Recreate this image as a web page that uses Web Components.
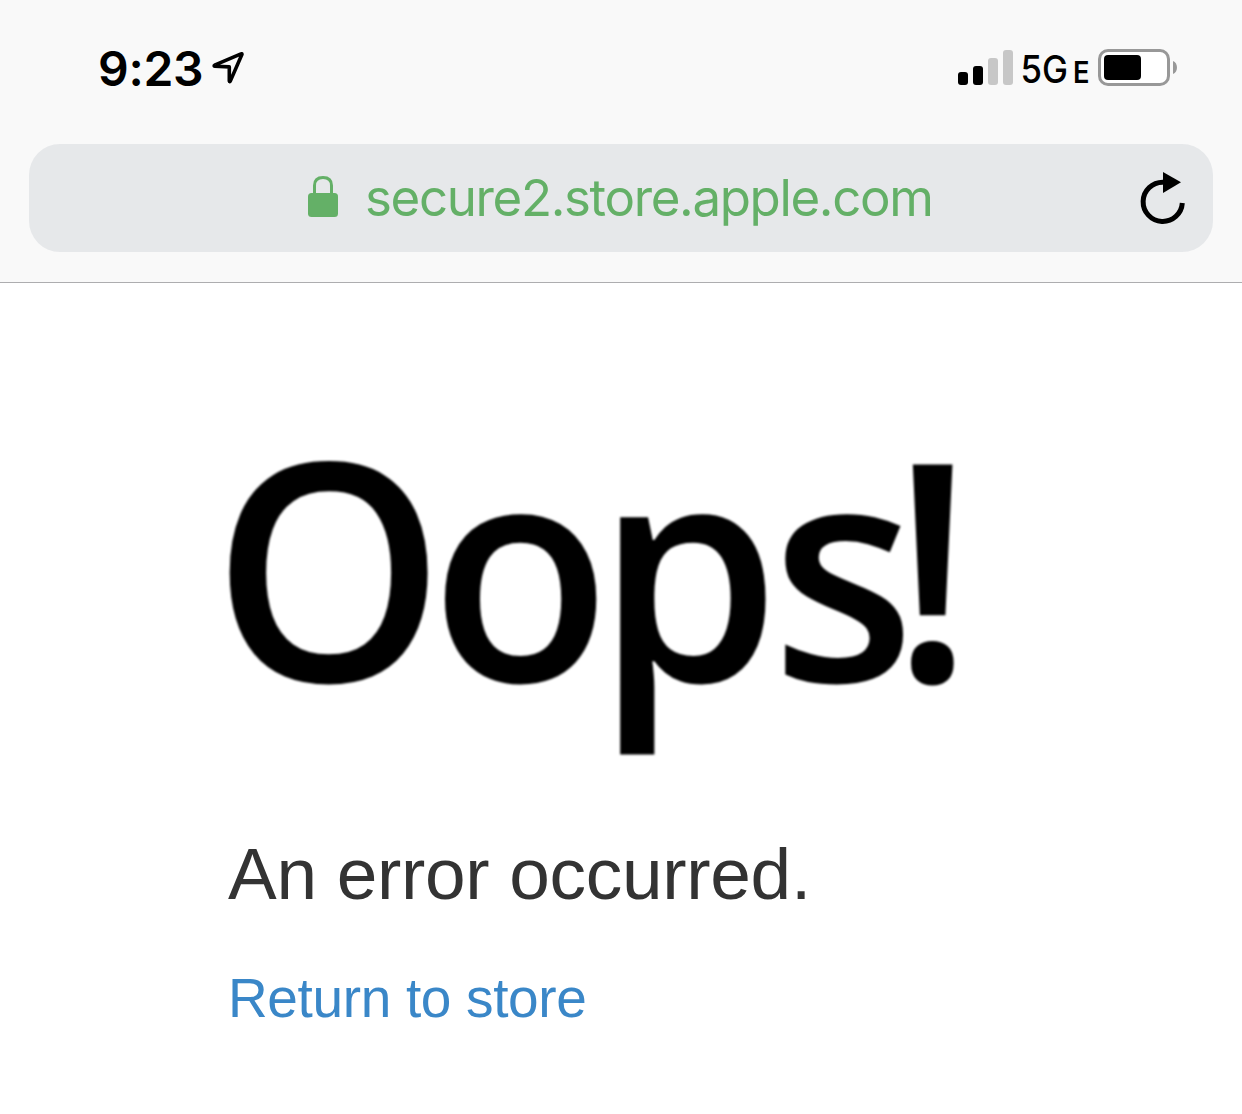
<!DOCTYPE html>
<html lang="en">
<head>
<meta charset="utf-8">
<title>Oops!</title>
<style>
   body {
      margin: 0;
      background: #fff;
      font-family: "Liberation Sans", Arial, sans-serif;
   }
</style>
</head>
<body>
<browser-header>
   <status-bar slot="status">9:23</status-bar>
   <address-bar>secure2.store.apple.com</address-bar>
</browser-header>
<error-page>
   <oops-title slot="title"></oops-title>
   An error occurred.
   <store-link slot="link">Return to store</store-link>
</error-page>

<script>
class LocationIcon extends HTMLElement {
   constructor() {
      super();
      this.attachShadow({mode: 'open'}).innerHTML = `
         <style>:host { display: block; width: 34px; height: 36px; } svg { display: block; }</style>
         <svg width="34" height="36" viewBox="0 0 34 36" fill="none" stroke="#000" stroke-width="3.6" stroke-linejoin="round">
            <path d="M31 4.2C31 3.8 30.6 3.6 30 3.9L3.6 15.2C2.9 15.6 3 16.2 3.8 16.3L18.3 16.9L18.3 31C18.4 31.8 19 31.8 19.3 31.1Z"/>
         </svg>`;
   }
}

class SignalIcon extends HTMLElement {
   constructor() {
      super();
      this.attachShadow({mode: 'open'}).innerHTML = `
         <style>:host { display: block; width: 55px; height: 36px; } svg { display: block; }</style>
         <svg width="55" height="36" viewBox="0 0 55 36">
            <rect x="0" y="22" width="10" height="13" rx="3"/>
            <rect x="15" y="16" width="10" height="19" rx="3"/>
            <rect x="30" y="8" width="10" height="27" rx="3" fill="#c7c7c7"/>
            <rect x="45" y="0" width="10" height="35" rx="3" fill="#c7c7c7"/>
         </svg>`;
   }
}

class NetworkLabel extends HTMLElement {
   constructor() {
      super();
      this.attachShadow({mode: 'open'}).innerHTML = `
         <style>
            :host { display: block; width: 68px; height: 36px; }
            svg { display: block; overflow: visible; }
            text { font-family: Inter, sans-serif; font-weight: 550; }
            .small { font-weight: 600; }
         </style>
         <svg width="68" height="36" viewBox="0 0 68 36">
            <text x="-1.6" y="33" font-size="38" textLength="47.5" lengthAdjust="spacingAndGlyphs">5G</text>
            <text class="small" x="51" y="33" font-size="30" textLength="16.5" lengthAdjust="spacingAndGlyphs">E</text>
         </svg>`;
   }
}

class BatteryIcon extends HTMLElement {
   constructor() {
      super();
      this.attachShadow({mode: 'open'}).innerHTML = `
         <style>:host { display: block; width: 80px; height: 37px; } svg { display: block; }</style>
         <svg width="80" height="37" viewBox="0 0 80 37">
            <rect x="1.5" y="1.5" width="69" height="34" rx="8.5" fill="#fff" stroke="#989898" stroke-width="3"/>
            <rect x="6" y="6" width="37" height="25" rx="4"/>
            <path d="M75 12C80.3 14 80.3 23 75 25Z" fill="#989898"/>
         </svg>`;
   }
}

class LockIcon extends HTMLElement {
   constructor() {
      super();
      this.attachShadow({mode: 'open'}).innerHTML = `
         <style>:host { display: block; width: 30px; height: 44px; } svg { display: block; }</style>
         <svg width="30" height="41" viewBox="0 0 30 41">
            <path d="M6.5 19V9.5Q6.5 1.5 15 1.5T23.5 9.5V19" fill="none" stroke="currentColor" stroke-width="3"/>
            <rect y="17" width="30" height="24" rx="3.5" fill="currentColor"/>
         </svg>`;
   }
}

class ReloadIcon extends HTMLElement {
   constructor() {
      super();
      this.attachShadow({mode: 'open'}).innerHTML = `
         <style>:host { display: block; width: 46px; height: 53px; } svg { display: block; }</style>
         <svg width="46" height="53" viewBox="0 0 46 53">
            <path d="M23 10.2A19.6 19.6 0 1 0 42.3 31" fill="none" stroke="#000" stroke-width="5"/>
            <path d="M23 0L41 10.3L23 21Z"/>
         </svg>`;
   }
}

class StatusBar extends HTMLElement {
   constructor() {
      super();
      this.attachShadow({mode: 'open'}).innerHTML = `
         <style>
            :host {
               display: flex;
               justify-content: space-between;
               box-sizing: border-box;
               height: 144px;
               padding: 40px 64px 0 98px;
               font: 600 48px/58px Inter, sans-serif;
            }
            .left, .right { display: flex; align-items: flex-start; }
            .time { width: 113px; letter-spacing: -0.3px; white-space: nowrap; }
            location-icon { margin-top: 10px; }
            signal-icon { margin: 10px 9px 0 0; }
            network-label { margin: 10px 8px 0 0; }
            battery-icon { margin-top: 9px; }
         </style>
         <div class="left">
            <span class="time"><slot></slot></span>
            <location-icon></location-icon>
         </div>
         <div class="right">
            <signal-icon></signal-icon>
            <network-label></network-label>
            <battery-icon></battery-icon>
         </div>`;
   }
}

class AddressBar extends HTMLElement {
   constructor() {
      super();
      this.attachShadow({mode: 'open'}).innerHTML = `
         <style>
            :host {
               display: flex;
               align-items: center;
               box-sizing: border-box;
               height: 108px;
               margin: 0 29px;
               padding: 0 27px 0 279px;
               border-radius: 31px;
               background: #e6e8ea;
               color: #64b067;
               font: 400 51px/60px Inter, sans-serif;
            }
            .url { flex: 1; margin-left: 27px; letter-spacing: -1.35px; white-space: nowrap; }
         </style>
         <lock-icon></lock-icon>
         <span class="url"><slot></slot></span>
         <reload-icon></reload-icon>`;
   }
}

class BrowserHeader extends HTMLElement {
   constructor() {
      super();
      this.attachShadow({mode: 'open'}).innerHTML = `
         <style>
            :host {
               display: block;
               box-sizing: border-box;
               height: 283px;
               border-bottom: 1px solid #adadaf;
               background: #f9f9f9;
            }
         </style>
         <slot name="status"></slot>
         <slot></slot>`;
   }
}

class OopsTitle extends HTMLElement {
   constructor() {
      super();
      this.attachShadow({mode: 'open'}).innerHTML = `
         <style>
            :host { display: block; width: 732px; height: 300px; }
            svg { display: block; overflow: visible; filter: blur(0.9px); }
            text { font: 600 304px "Open Sans", "Noto Sans", sans-serif; }
         </style>
         <svg width="732" height="300" viewBox="0 0 732 300">
            <text transform="scale(.975 1)" x="-16.4 207.3 377.4 557 680.8" y="231.5">Oops!</text>
         </svg>`;
   }
}

class StoreLink extends HTMLElement {
   constructor() {
      super();
      this.attachShadow({mode: 'open'}).innerHTML = `
         <style>
            :host { display: block; font-size: 55px; line-height: 62px; letter-spacing: -0.35px; }
            a { color: #3a87c8; text-decoration: none; }
         </style>
         <a href="#"><slot></slot></a>`;
   }
}

class ErrorPage extends HTMLElement {
   constructor() {
      super();
      this.attachShadow({mode: 'open'}).innerHTML = `
         <style>
            :host { display: block; padding: 167px 0 0 228px; }
            p { margin: 82px 0 51px; color: #333; font-size: 73px; line-height: 84px; letter-spacing: -0.3px; }
         </style>
         <slot name="title"></slot>
         <p><slot></slot></p>
         <slot name="link"></slot>`;
   }
}

customElements.define('location-icon', LocationIcon);
customElements.define('signal-icon', SignalIcon);
customElements.define('network-label', NetworkLabel);
customElements.define('battery-icon', BatteryIcon);
customElements.define('lock-icon', LockIcon);
customElements.define('reload-icon', ReloadIcon);
customElements.define('status-bar', StatusBar);
customElements.define('address-bar', AddressBar);
customElements.define('browser-header', BrowserHeader);
customElements.define('oops-title', OopsTitle);
customElements.define('store-link', StoreLink);
customElements.define('error-page', ErrorPage);
</script>
</body>
</html>
